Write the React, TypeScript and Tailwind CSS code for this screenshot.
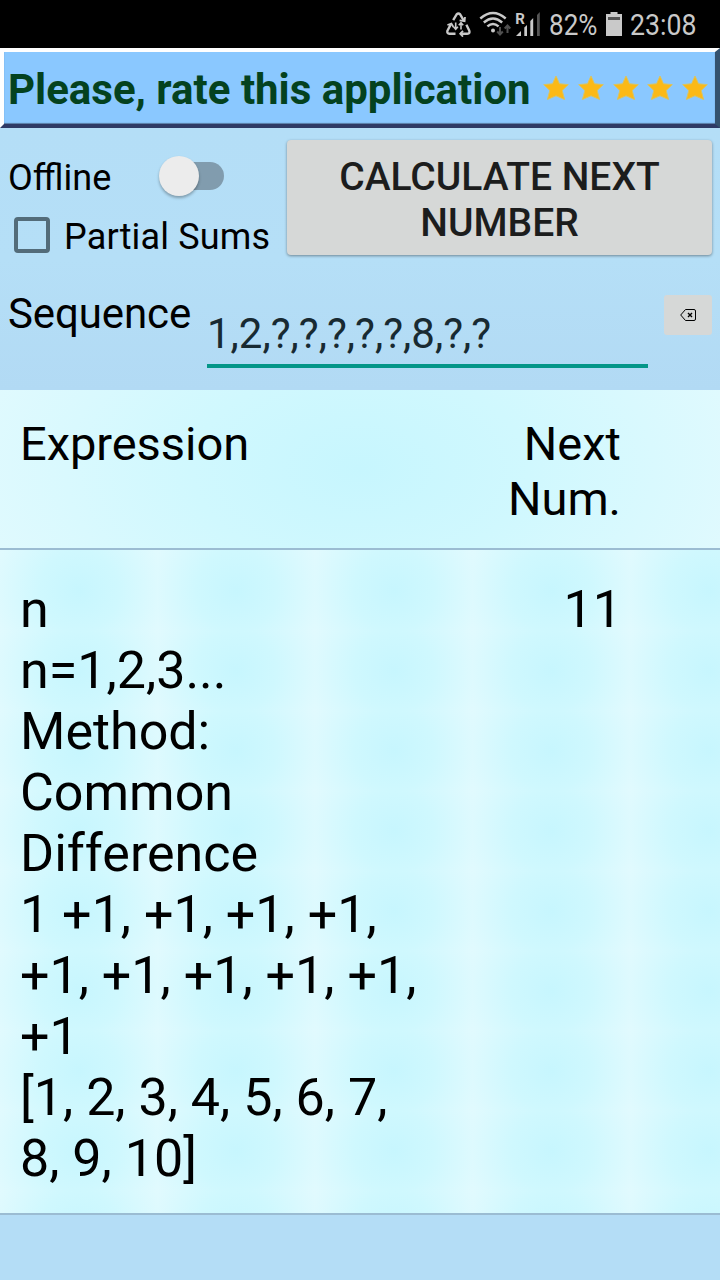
import type { ReactNode } from "react";

const lines = [
  "n",
  "n=1,2,3...",
  "Method:",
  "Common",
  "Difference",
  "1 +1, +1, +1, +1,",
  "+1, +1, +1, +1, +1,",
  "+1",
  "[1, 2, 3, 4, 5, 6, 7,",
  "8, 9, 10]",
];

function DataSaverIcon() {
  return (
    <svg width="28" height="26" viewBox="0 0 28 26" fill="none" stroke="#c9c9c9" strokeWidth="2.4" className="shrink-0">
      <path d="M8.2 9.2 11.6 3.4Q13.4 1.6 15.2 3.4L18.8 9.6" />
      <path d="M14.6 9.4 19.6 10.2 20 6" strokeWidth="1.8" />
      <path d="M5.8 13.4 2.4 19.8Q1.8 22.6 4.4 22.8H10.5" />
      <path d="M2.4 14 6.4 12.6 8.4 16" strokeWidth="1.8" />
      <path d="M15.6 22.8H22.2Q25.4 22.6 24.2 19.4L21.4 13.8" />
      <path d="M18 19.8 15.2 22.8 18 25.6" strokeWidth="1.8" />
      <path d="M10.7 11.5V18M8.5 15.8 10.7 18.2 12.9 15.8M16 18.5V12M13.8 14.2 16 11.8 18.2 14.2" strokeWidth="1.6" />
    </svg>
  );
}

function WifiIcon() {
  return (
    <svg width="33" height="26" viewBox="0 0 33 26" fill="none" className="shrink-0">
      <g stroke="#c9c9c9" strokeWidth="2.4">
        <path d="M1.3 7.5Q14 -3.5 26.7 7.5" />
        <path d="M4.8 11.5Q14 3.6 23.2 11.5" />
        <path d="M8.4 15.4Q14 10.4 19.6 15.4" />
      </g>
      <circle cx="14" cy="19.4" r="2" fill="#c9c9c9" />
      <path d="M21 16V23M18.2 20.5 21 23.5 23.8 20.5M28.5 22V15M25.7 17.5 28.5 14.5 31.3 17.5" stroke="#505050" strokeWidth="2" />
    </svg>
  );
}

function SignalIcon() {
  return (
    <svg width="26" height="26" viewBox="0 0 26 26" className="shrink-0">
      <g fill="#c9c9c9">
        <path d="M1 25 6 20V25Z" />
        <path d="M9.3 16.5 12 14V25H9.3Z" />
        <path d="M15.3 10 18.2 7V25H15.3Z" />
      </g>
      <path d="M22 4 24.8 1V25H22Z" fill="#555" />
      <text x="0.3" y="12.5" fill="#c9c9c9" fontFamily="Roboto, sans-serif" fontWeight="700" fontSize="15">R</text>
    </svg>
  );
}

function StatusBar() {
  return (
    <div className="flex h-12 items-center bg-black pl-[445px] text-[30px] leading-[48px] text-[#c9c9c9]">
      <DataSaverIcon />
      <div className="ml-1.5"><WifiIcon /></div>
      <div className="ml-[3px]"><SignalIcon /></div>
      <div className="ml-2 w-[57px] origin-left scale-x-[0.87] pt-px whitespace-nowrap">82%</div>
      <svg width="16" height="24" viewBox="0 0 16 24" className="shrink-0">
        <path d="M4.5 0H11.5V2H16V24H0V2H4.5Z" fill="#c9c9c9" />
        <path d="M2 5H14V8H2Z" fill="#555" />
      </svg>
      <div className="ml-2 origin-left scale-x-[0.89] pt-px whitespace-nowrap">23:08</div>
    </div>
  );
}

function Star() {
  return (
    <svg width="26" height="26" viewBox="0 0 26 26" className="shrink-0">
      <path
        d="M13 1 16.5 8.8 25.3 9.6 19.2 15.5 21.6 24.5 13 20.8 4.4 24.5 6.8 15.5 .7 9.6 9.5 8.8Z"
        fill="#fbb917"
        stroke="#d9c463"
        strokeWidth="1"
      />
    </svg>
  );
}

function Banner() {
  return (
    <div className="flex h-20 items-center border-t-4 border-r-[5px] border-b-4 border-l-4 border-t-white border-r-[#34526e] border-b-[#2e3a66] border-l-white bg-[#8ac8ff] pl-1 shadow-[inset_0_-1px_1px_#5679a4]">
      <span className="w-[535px] shrink-0 pt-[3px] text-[42px] leading-[50px] font-bold whitespace-nowrap text-[#04421f]">
        Please, rate this application
      </span>
      <div className="flex gap-[8.8px]">
        <Star /><Star /><Star /><Star /><Star />
      </div>
    </div>
  );
}

function Line({ children }: { children: ReactNode }) {
  return <div className="h-[61px] whitespace-nowrap">{children}</div>;
}

export default function App() {
  return (
    <div className="flex h-[1280px] w-[720px] flex-col overflow-hidden bg-[#b4ddf6] font-['Roboto',sans-serif] text-black">
      <StatusBar />
      <Banner />
      <div className="flex h-[262px] flex-col bg-linear-to-b from-[#b4def7] via-[#b5dff7] to-[#b2daf4]">
        <div className="flex h-[140px] justify-between pt-3 pr-2 pl-2">
          <div className="pt-[17px] text-[36px] leading-[42px]">
            <div className="flex items-center">
              <span className="w-[151px]">Offline</span>
              <div className="mb-1 flex h-7 w-[65px] items-center rounded-full bg-linear-to-r from-transparent from-30% to-[#819cae] to-30%">
                <div className="size-10 shrink-0 rounded-full bg-[#ececec] shadow-[0_2px_3px_rgba(0,0,0,0.3)]" />
              </div>
            </div>
            <div className="mt-[17px] flex items-center">
              <div className="mb-1 ml-1.5 size-9 rounded-[4px] border-4 border-[#536c7a]" />
              <span className="ml-3.5 tracking-[0.15px] whitespace-nowrap">Partial Sums</span>
            </div>
          </div>
          <button className="h-[115px] w-[425px] rounded-[4px] bg-[#d6d8d7] pt-[5px] text-[39px] leading-[46px] font-medium text-[#1c1d1d] shadow-[0_1px_3px_rgba(0,0,0,0.4)]">
            CALCULATE NEXT NUMBER
          </button>
        </div>
        <div className="flex items-start pl-2">
          <span className="mt-5 w-[199px] text-[42px] leading-[51px] tracking-[-0.1px]">Sequence</span>
          <div className="mt-[37px] h-[63px] w-[441px] border-b-4 border-[#049688] text-[42px] leading-[57px] whitespace-nowrap text-[#182a32]">
            1,2,?,?,?,?,?,8,?,?
          </div>
          <div className="mt-[27px] ml-4 flex h-10 w-12 items-center justify-center rounded-[3px] bg-[#d6d8d7]">
            <svg width="16" height="12" viewBox="0 0 16 12" fill="none" stroke="black">
              <path d="M5.5.5H14Q15.5.5 15.5 2V10Q15.5 11.5 14 11.5H5.5L.7 6Z" />
              <path d="M8 4 12 8M12 4 8 8" strokeWidth="1.4" />
            </svg>
          </div>
        </div>
      </div>
      <div className="flex h-[160px] justify-between border-b-2 border-[#9bbcd2] bg-[radial-gradient(ellipse_420px_250px,#c7f6fe_0%,#d0f8fe_40%,#e2fafe_100%)] pt-[26px] pr-[99px] pl-5 text-[47px] leading-[55px]">
        <div className="tracking-[-0.05px]">Expression</div>
        <div className="text-right">Next<br />Num.</div>
      </div>
      <div className="flex h-[665px] justify-between border-b-2 border-[#9bbcd2] bg-[radial-gradient(circle_farthest-corner,#c7f6fe_0%,#cff8fe_45%,#e1fafe_100%)] bg-size-[157.5px_80px] bg-position-[0_1px] pt-[29px] pr-[98px] pl-5 text-[52px] leading-[61px]">
        <div>{lines.map((line) => <Line key={line}>{line}</Line>)}</div>
        <div>11</div>
      </div>
    </div>
  );
}
